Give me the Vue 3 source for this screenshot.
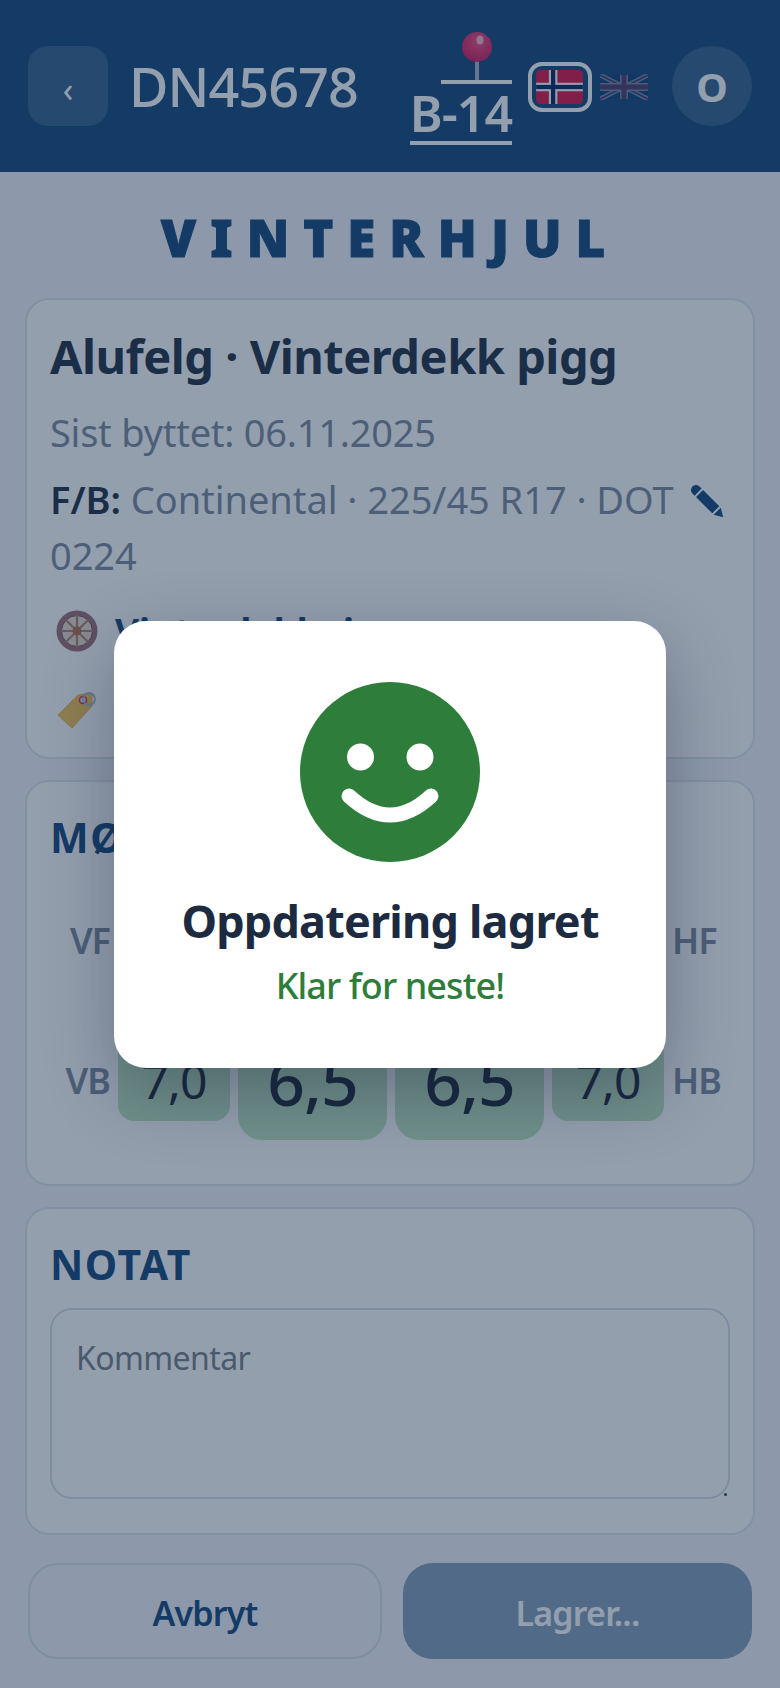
<script setup>
const rows = [
  ['VF', 'HF', '', ''],
  ['VB', 'HB', '7,0', '6,5'],
]
</script>

<template>
  <div class="page">
    <header class="top">
      <button class="back">‹</button>
      <div class="reg">DN45678</div>
      <div class="spot">
        <svg class="pin" width="102" height="54" viewBox="0 0 102 54">
          <defs>
            <radialGradient id="ball" cx="0.55" cy="0.3" r="0.75">
              <stop offset="0" stop-color="#f2487f" />
              <stop offset="1" stop-color="#cf0f55" />
            </radialGradient>
          </defs>
          <rect x="65" y="28" width="4" height="24" fill="#aab2c0" />
          <rect x="31" y="49" width="71" height="4" fill="#fff" />
          <circle cx="67" cy="16" r="15" fill="url(#ball)" />
          <ellipse cx="70" cy="9" rx="3.5" ry="4.5" fill="#fff" opacity="0.6" />
        </svg>
        <div class="slot">B-14</div>
      </div>
      <div class="flag-box">
        <svg width="47" height="34" viewBox="0 0 22 16">
          <rect width="22" height="16" rx="2" fill="#dc0f3f" />
          <rect x="6" width="4" height="16" fill="#fff" />
          <rect y="6" width="22" height="4" fill="#fff" />
          <rect x="7" width="2" height="16" fill="#00205b" />
          <rect y="7" width="22" height="2" fill="#00205b" />
        </svg>
      </div>
      <svg class="uk" width="48" height="26" viewBox="0 0 60 30">
        <rect width="60" height="30" fill="#012169" />
        <path d="M0 0L60 30M60 0L0 30" stroke="#fff" stroke-width="6" />
        <path d="M0 0L60 30M60 0L0 30" stroke="#c8102e" stroke-width="2" />
        <path d="M30 0V30M0 15H60" stroke="#fff" stroke-width="10" />
        <path d="M30 0V30M0 15H60" stroke="#c8102e" stroke-width="6" />
      </svg>
      <div class="avatar">O</div>
    </header>

    <h1 class="heading">VINTERHJUL</h1>

    <main class="content">
      <section class="card info">
        <h2 class="wheel-name">Alufelg · Vinterdekk pigg</h2>
        <p class="muted">Sist byttet: 06.11.2025</p>
        <div class="tyre">
          <p class="muted tyre-text"><b>F/B:</b> Continental · 225/45 R17 · DOT 0224</p>
          <svg class="pencil" width="34" height="34" viewBox="0 0 34 34">
            <g transform="rotate(45 17 17)" fill="#0f4377">
              <path d="M3 12H0a5 5 0 0 0 0 10h3z" />
              <rect x="5" y="12" width="23" height="10" />
              <path d="M30 12l8.500 5-8.500 5z" />
            </g>
          </svg>
        </div>
        <div class="status">
          <svg width="42" height="42" viewBox="0 0 42 42">
            <circle cx="21" cy="21" r="18" fill="#e8d8c8" stroke="#9c6a70" stroke-width="5" />
            <circle cx="21" cy="21" r="15.500" fill="none" stroke="#6e4a50" stroke-width="1" />
            <g stroke="#a98068" stroke-width="2.200">
              <path d="M21 5V37M5 21H37M9.700 9.700L32.300 32.300M32.300 9.700L9.700 32.300" />
            </g>
            <circle cx="21" cy="21" r="4.500" fill="#b3683f" />
          </svg>
          <span class="status-text">Vinterdekk i</span>
        </div>
        <div class="status tag-row">
          <svg width="42" height="42" viewBox="0 0 42 42">
            <path d="M2 27L22 7 36 5l0 13L16 40z" fill="#f4c150" stroke="#eab543" stroke-width="1" stroke-linejoin="round" />
            <circle cx="27" cy="12" r="3.500" fill="#dfe4f5" stroke="#e0203c" stroke-width="1.500" />
            <circle cx="33" cy="11" r="6" fill="none" stroke="#a4b5cd" stroke-width="1.800" />
          </svg>
        </div>
      </section>

      <section class="card measure">
        <h2 class="section">MØNSTERDYBDE</h2>
        <div v-for="row in rows" :key="row[0]" class="tread-row">
          <span class="side left">{{ row[0] }}</span>
          <div class="tile small"><span v-if="row[2]">{{ row[2] }}</span></div>
          <div class="tile big"><span v-if="row[3]">{{ row[3] }}</span></div>
          <div class="tile big"><span v-if="row[3]">{{ row[3] }}</span></div>
          <div class="tile small"><span v-if="row[2]">{{ row[2] }}</span></div>
          <span class="side">{{ row[1] }}</span>
        </div>
      </section>

      <section class="card note">
        <h2 class="section">NOTAT</h2>
        <div class="comment-wrap">
          <textarea class="comment" placeholder="Kommentar"></textarea>
        </div>
      </section>

      <div class="actions">
        <button class="btn cancel">Avbryt</button>
        <button class="btn save">Lagrer...</button>
      </div>
    </main>

    <div class="overlay">
      <div class="modal">
        <svg class="smile" width="180" height="180" viewBox="0 0 180 180">
          <circle cx="90" cy="90" r="90" fill="#2e7d3a" />
          <circle cx="60.500" cy="75" r="13.500" fill="#fff" />
          <circle cx="120" cy="75" r="13.500" fill="#fff" />
          <path d="M49 114Q90 152 131 114" fill="none" stroke="#fff" stroke-width="15" stroke-linecap="round" />
        </svg>
        <div class="done">Oppdatering lagret</div>
        <div class="next">Klar for neste!</div>
      </div>
    </div>
  </div>
</template>

<style>
html, body {
  margin: 0;
  background: #f1f4f7;
}
</style>

<style scoped>
* {
  box-sizing: border-box;
}

.page {
  position: relative;
  width: 780px;
  height: 1688px;
  overflow: hidden;
  background: #f1f4f7;
  font-family: "Noto Sans", "Open Sans", sans-serif;
  color: #1c2b3f;
}

.top {
  display: flex;
  align-items: center;
  height: 172px;
  padding: 0 28px;
  background: #0f4377;
  color: #fff;
}

.back {
  width: 80px;
  height: 80px;
  flex: none;
  border: none;
  border-radius: 20px;
  background: rgba(255, 255, 255, 0.14);
  color: #fff;
  font-size: 34px;
  font-family: inherit;
  padding: 6px 0 0;
}

.reg {
  margin-left: 21px;
  font-size: 54px;
  font-weight: 500;
  letter-spacing: -1px;
  line-height: 60px;
}

.spot {
  margin-left: 52px;
  width: 102px;
  margin-top: 4px;
}

.pin {
  display: block;
}

.slot {
  font-size: 50px;
  font-weight: 600;
  line-height: 56px;
  text-align: right;
  letter-spacing: -1px;
  white-space: nowrap;
  border-bottom: 4px solid #fff;
  height: 60px;
}

.flag-box {
  display: flex;
  align-items: center;
  justify-content: center;
  width: 64px;
  height: 50px;
  margin-left: 16px;
  margin-top: 2px;
  border: 4px solid #fff;
  border-radius: 14px;
}

.uk {
  margin-left: 8px;
  margin-top: 2px;
  opacity: 0.35;
}

.avatar {
  width: 80px;
  height: 80px;
  margin-left: auto;
  border-radius: 50%;
  background: rgba(255, 255, 255, 0.14);
  display: flex;
  align-items: center;
  justify-content: center;
  font-size: 40px;
  font-weight: 700;
}

.heading {
  margin: 0;
  height: 126px;
  line-height: 130px;
  text-align: center;
  font-family: "Noto Sans", sans-serif;
  font-size: 51px;
  font-weight: 900;
  letter-spacing: 14px;
  -webkit-text-stroke: 1px #0f4377;
  color: #0f4377;
}

.content {
  display: flex;
  flex-direction: column;
  gap: 21px;
  padding: 0 25px;
}

.card {
  border: 2px solid #dbe2e9;
  border-radius: 24px;
  background: #fff;
  padding: 0 23px;
}

.info {
  height: 461px;
  padding-top: 26px;
}

.wheel-name {
  margin: 0;
  font-size: 47px;
  line-height: 60px;
  font-weight: 700;
  letter-spacing: -0.5px;
}

.muted {
  margin: 0;
  font-size: 38px;
  line-height: 56px;
  color: #798799;
  letter-spacing: -0.25px;
}

.info > .muted {
  margin-top: 18px;
}

.tyre {
  display: flex;
  gap: 6px;
  margin-top: 11px;
}

.tyre-text b {
  color: #1c2b3f;
  font-weight: 600;
}

.tyre-text {
  flex: 1;
  letter-spacing: -0.05px;
}

.pencil {
  flex: none;
  margin-top: 14px;
  margin-right: 5px;
}

.status {
  display: flex;
  align-items: center;
  gap: 17px;
  height: 42px;
  margin-top: 27px;
  margin-left: 6px;
}

.tag-row {
  margin-top: 36px;
}

.status-text {
  font-size: 37px;
  font-weight: 700;
  word-spacing: 14px;
  white-space: nowrap;
  color: #0f4377;
}

.measure {
  height: 406px;
  padding-top: 29px;
}

.section {
  margin: 0;
  font-size: 41px;
  line-height: 52px;
  font-weight: 700;
  letter-spacing: 1.5px;
  color: #0f4377;
}

.tread-row {
  display: grid;
  grid-template-columns: 60px 112px 149px 149px 112px 1fr;
  gap: 8px;
  align-items: center;
  height: 140px;
  position: relative;
  top: 7px;
}

.side {
  font-size: 36px;
  font-weight: 600;
  color: #798799;
  letter-spacing: -1px;
}

.side.left {
  text-align: right;
}

.tile {
  display: flex;
  align-items: center;
  justify-content: center;
  background: #bbe2bd;
  color: #172333;
}

.small {
  height: 82px;
  border-radius: 16px;
  font-size: 48px;
  letter-spacing: -1px;
}

.big {
  height: 120px;
  border-radius: 24px;
  font-size: 66px;
  font-weight: 500;
  letter-spacing: -1px;
}

.note {
  height: 328px;
  padding-top: 29px;
}

.comment-wrap {
  position: relative;
  margin-top: 18px;
}

.comment-wrap::after {
  content: "";
  position: absolute;
  right: 3px;
  bottom: 3px;
  width: 3px;
  height: 3px;
  border-radius: 50%;
  background: #2a3444;
}

.comment {
  display: block;
  width: 100%;
  height: 191px;
  padding: 26px 24px;
  border: 2px solid #d3dbe3;
  border-radius: 22px;
  background: #fff;
  font-family: inherit;
  font-size: 32px;
  letter-spacing: -0.6px;
  outline: none;
  resize: none;
}

.comment::placeholder {
  color: #757b85;
}

.actions {
  display: flex;
  gap: 21px;
  padding: 7px 3px 0;
}

.btn {
  height: 96px;
  border-radius: 30px;
  padding: 3px 0 0;
  font-family: inherit;
  font-size: 34px;
  font-weight: 600;
  letter-spacing: -0.8px;
}

.cancel {
  width: 354px;
  border: 2px solid #d5dde5;
  background: #f1f4f7;
  color: #0f4377;
}

.save {
  flex: 1;
  border: none;
  background: #809cb7;
  color: #fff;
}

.overlay {
  position: absolute;
  inset: 0;
  display: flex;
  align-items: center;
  justify-content: center;
  background: rgba(28, 50, 83, 0.47);
}

.modal {
  display: flex;
  flex-direction: column;
  align-items: center;
  width: 552px;
  height: 447px;
  padding-top: 61px;
  border-radius: 32px;
  background: #fff;
  box-shadow: 0 24px 70px rgba(15, 23, 42, 0.32);
}

.smile {
  display: block;
}

.done {
  margin-top: 28px;
  font-size: 45px;
  line-height: 62px;
  font-weight: 700;
  color: #1c2b3f;
  letter-spacing: -0.8px;
}

.next {
  margin-top: 10px;
  font-size: 36px;
  line-height: 48px;
  font-weight: 500;
  color: #2e7d3a;
  letter-spacing: -0.9px;
}
</style>
